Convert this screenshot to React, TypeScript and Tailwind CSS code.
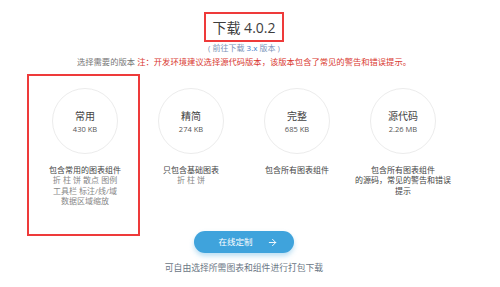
import { ArrowRight } from "lucide-react";

type Version = { name: string; size: string; lead: string[]; rest: string[]; marked?: boolean };

const versions: Version[] = [
  { name: "常用", size: "430 KB", lead: ["包含常用的图表组件"], rest: ["折 柱 饼 散点 图例", "工具栏 标注/线/域", "数据区域缩放"], marked: true },
  { name: "精简", size: "274 KB", lead: ["只包含基础图表"], rest: ["折 柱 饼"] },
  { name: "完整", size: "685 KB", lead: ["包含所有图表组件"], rest: [] },
  { name: "源代码", size: "2.26 MB", lead: ["包含所有图表组件", "的源码，常见的警告和错误", "提示"], rest: [] },
];

function VersionCard({ name, size, lead, rest, marked }: Version) {
  return (
    <div className="relative flex w-[106px] flex-col items-center">
      {marked && <div className="absolute left-[-5px] top-[-14px] h-[162px] w-[113px] border-2 border-[#ee3a3a]" />}
      <div className="flex h-[66px] w-[66px] flex-col items-center justify-center rounded-full border border-[#ececec] pt-[1px]">
        <span className="text-[10px] leading-[14px] text-[#444]">{name}</span>
        <span className="text-[7.5px] leading-[12px] text-[#555]">{size}</span>
      </div>
      <div className="mt-[11px] text-center text-[8px] leading-[10.4px] whitespace-nowrap">
        {lead.map((line) => (
          <p key={line} className="text-[#444]">{line}</p>
        ))}
        {rest.map((line) => (
          <p key={line} className="text-[#888]">{line}</p>
        ))}
      </div>
    </div>
  );
}

export default function App() {
  return (
    <div className="flex h-[287px] w-[488px] flex-col items-center bg-white font-['Open_Sans','Noto_Sans_CJK_SC',sans-serif]">
      <div className="mt-[12px] flex h-[30px] w-[80px] items-center justify-center border-2 border-[#ee3a3a] text-[14px] text-[#3d3d3d]">
        下载 4.0.2
      </div>
      <p className="mt-[1px] text-[8px] leading-[10px] text-[#7a93b8]">
        ( 前往下载 <span className="text-[#3b7bc8]">3.x</span> 版本 )
      </p>
      <p className="mt-[4px] text-[8.3px] leading-[10px] text-[#777]">
        选择需要的版本 <span className="text-[#d9382f]">注：开发环境建议选择源代码版本，该版本包含了常见的警告和错误提示。</span>
      </p>
      <div className="mt-[21px] flex h-[143px]">
        {versions.map((v) => (
          <VersionCard key={v.name} {...v} />
        ))}
      </div>
      <button className="flex h-[22px] w-[100px] items-center justify-center gap-[14px] rounded-full bg-[#3fa3dc] pl-[8px] text-[8.5px] text-white shadow-[0_3px_5px_rgba(63,163,220,0.35)]">
        在线定制
        <ArrowRight size={11} strokeWidth={2} />
      </button>
      <p className="mt-[10px] text-[8.8px] leading-[10px] text-[#6b7785]">可自由选择所需图表和组件进行打包下载</p>
    </div>
  );
}
